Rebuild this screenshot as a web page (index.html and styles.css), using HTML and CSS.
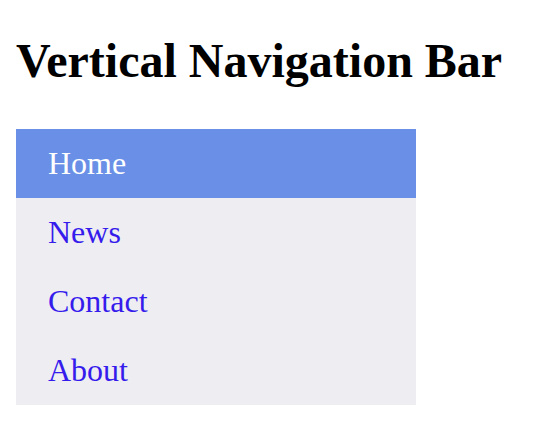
FILE: index.html
```html
<!DOCTYPE html>
<html lang="en">
<head>
<meta charset="utf-8">
<title>Vertical Navigation Bar</title>
<link rel="stylesheet" href="styles.css">
</head>
<body>
<h1 class="title">Vertical Navigation Bar</h1>
<nav aria-label="Main">
<ul class="menu">
<li><a class="menu-link active" href="#home">Home</a></li>
<li><a class="menu-link" href="#news">News</a></li>
<li><a class="menu-link" href="#contact">Contact</a></li>
<li><a class="menu-link" href="#about">About</a></li>
</ul>
</nav>
</body>
</html>
```
FILE: styles.css
```css
body {
  margin: 0;
  padding: 32px 16px 16px;
  background: #ffffff;
  color: #000000;
  font-family: "Liberation Serif", "Times New Roman", serif;
}

.title {
  margin: 0 0 40px;
  font-size: 48px;
  line-height: 57px;
  font-weight: bold;
  white-space: nowrap;
}

.menu {
  margin: 0;
  padding: 0;
  list-style: none;
  width: 80%;
  max-width: 400px;
  background: #eeedf2;
}

.menu-link {
  display: block;
  padding: 16px 32px;
  color: #351bec;
  font-size: 32px;
  line-height: 37px;
  text-decoration: none;
}

.menu-link.active {
  background: #698fe6;
  color: #ffffff;
}
```
